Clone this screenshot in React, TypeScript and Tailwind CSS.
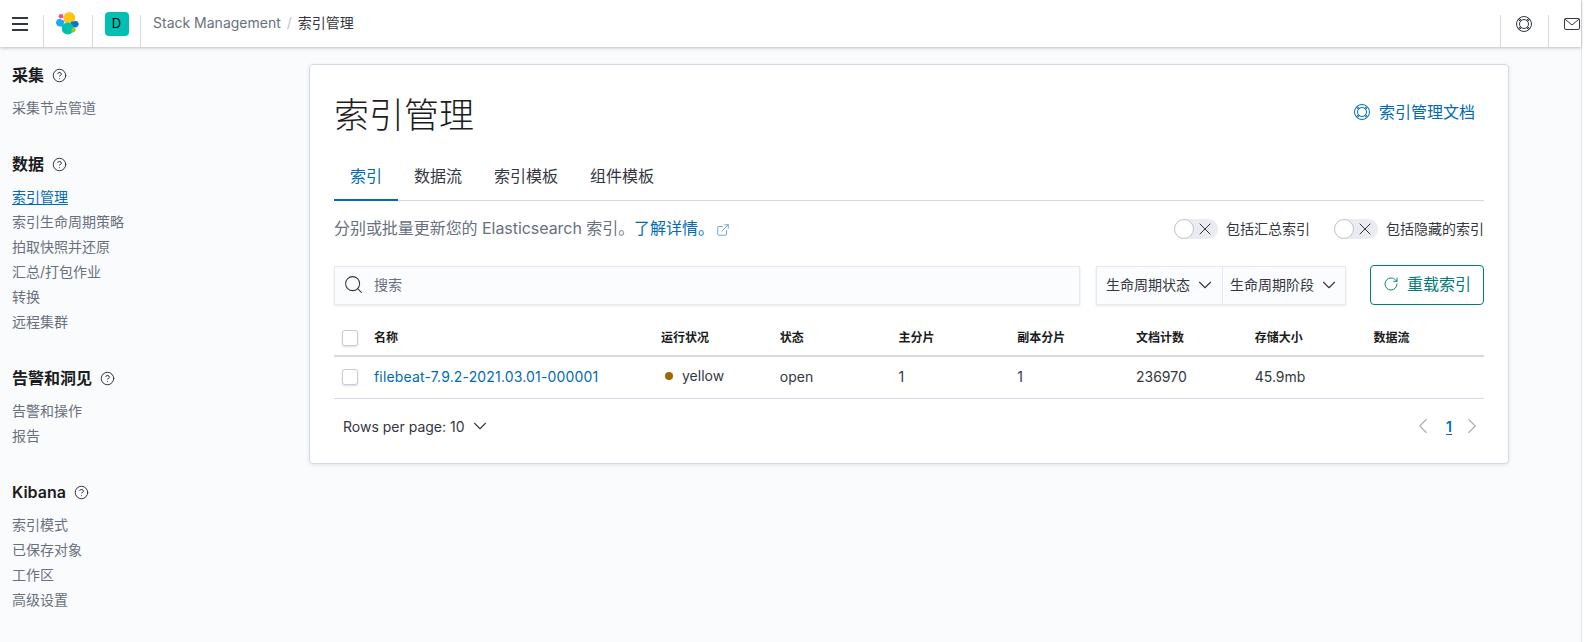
import React from "react";
import { X, ChevronDown, ChevronLeft, ChevronRight, Search, RotateCw, CircleHelp, ExternalLink } from "lucide-react";

const font = "font-['Inter','Noto_Sans_CJK_SC',sans-serif]";

function Logo() {
  return (
    <svg width="23" height="23" viewBox="0 0 23 23">
      <circle cx="13.300" cy="6" r="6" fill="#fec514" />
      <circle cx="5" cy="4.300" r="2.300" fill="#f04e98" />
      <path d="M0 10.500C0 8.300 2 6.500 4.200 7.100L8.300 8.800C8.200 10.500 7.600 12.500 6.800 14.300C6 14.800 5 14.800 4 14.600C1.700 14.300 0 12.700 0 10.500Z" fill="#1ba9f5" />
      <path d="M15 9.700L19.500 9C21.600 9 22.900 10.500 22.700 12.300C22.600 14.300 20.600 15.800 18.600 15.500L15.100 14.500C14.500 13 14.500 11.300 15 9.700Z" fill="#0077cc" />
      <circle cx="11.700" cy="16.500" r="6" fill="#00bfb3" />
      <path d="M15.500 16.200L17.800 15.700C19.300 15.700 20 17 19.500 18.400C18.900 20 17 21 15.200 20.400C15.700 19.100 15.800 17.500 15.500 16.200Z" fill="#93c90e" />
    </svg>
  );
}

function Buoy({ className = "" }: { className?: string }) {
  return (
    <svg width="16" height="16" viewBox="0 0 16 16" fill="none" stroke="currentColor" strokeWidth="1" className={className}>
      <circle cx="8" cy="8" r="7.500" />
      <circle cx="8" cy="8" r="4.500" />
      <path d="M2.700 2.700L4.800 4.800M13.300 2.700L11.200 4.800M2.700 13.300L4.800 11.200M13.300 13.300L11.200 11.200" strokeWidth="2.200" />
      <path d="M3.300 3.300L4.500 4.500M12.700 3.300L11.500 4.500M3.300 12.700L4.500 11.500M12.700 12.700L11.500 11.500" stroke="#fff" strokeWidth="0.700" />
    </svg>
  );
}

function Separator() {
  return <span className="absolute left-0 bottom-0 h-[32px] w-px bg-[#d3dae6]" />;
}

function Group({ title, items, className = "" }: { title: string; items: string[]; className?: string }) {
  return (
    <div className={className}>
      <div className="flex items-center h-[24px]">
        <span className="text-[16px] font-semibold text-[#1a1c21] leading-[24px]">{title}</span>
        <CircleHelp size={15} strokeWidth={1.6} className="ml-[8px] text-[#343741]" />
      </div>
      <ul className="mt-[8px]">
        {items.map((t) => (
          <li key={t} className={`h-[25px] text-[14px] leading-[25px] ${t === "索引管理" ? "text-[#006bb4]" : "text-[#69707d]"}`}>
            <span className={t === "索引管理" ? "underline underline-offset-2" : ""}>{t}</span>
          </li>
        ))}
      </ul>
    </div>
  );
}

const headers = ["运行状况", "状态", "主分片", "副本分片", "文档计数", "存储大小", "数据流"];

function Toggle({ label }: { label: string }) {
  return (
    <div className="flex items-center gap-[8px] mt-[1px]">
      <div className="w-[44px] h-[20px] rounded-full bg-[#e9ebf0] flex items-center">
        <div className="w-[20px] h-[20px] rounded-full bg-white border border-[#c2c3c9]" />
        <X size={20} strokeWidth={1.200} className="ml-[1px] text-[#343741]" />
      </div>
      <span className="text-[14px] leading-[20px] text-[#343741]">{label}</span>
    </div>
  );
}

function Checkbox() {
  return (
    <div className="w-[40px] shrink-0 pl-[8px]">
      <div className="w-[16px] h-[16px] bg-white border border-[#c9cdd8] rounded-[3px] shadow-[0_1px_2px_rgba(60,70,110,0.2)]" />
    </div>
  );
}

export default function App() {
  return (
    <div className={`${font} w-[1584px] h-[642px] bg-white overflow-hidden`}>
      <div className="w-[1582px] h-[642px] bg-[#fafbfd] border-r border-[#e4e5e9] flex flex-col">
        <header className="h-[47px] shrink-0 bg-white flex items-center shadow-[0_1px_3px_rgba(60,70,110,0.35)] relative z-10">
          <div className="w-[43px] h-full flex items-center pl-[8px]">
            <svg width="24" height="24" viewBox="0 0 24 24" stroke="#343741" strokeWidth="2">
              <path d="M4 6H20M4 12H20M4 18H20" />
            </svg>
          </div>
          <div className="relative w-[49px] h-full flex items-center justify-center">
            <Separator />
            <Logo />
          </div>
          <div className="relative w-[48px] h-full flex items-center justify-center">
            <Separator />
            <div className="w-[24px] h-[24px] ml-[1px] rounded-[4px] bg-[#00bfb3] flex items-center justify-center text-[13px] text-black">D</div>
          </div>
          <div className="relative h-full flex items-center pl-[13px] pb-[2px] text-[14px] leading-[20px]">
            <Separator />
            <span className="text-[#69707d]">Stack Management</span>
            <span className="text-[#c2c3c9] mx-[6px]">/</span>
            <span className="text-[#343741]">索引管理</span>
          </div>
          <div className="ml-auto flex h-full">
            <div className="relative w-[48px] flex items-center justify-center text-[#343741]">
              <Separator />
              <Buoy />
            </div>
            <div className="relative w-[33px] flex items-center pl-[16px]">
              <Separator />
              <svg width="16" height="12" viewBox="0 0 16 12" fill="none" stroke="#343741" className="shrink-0">
                <rect x="0.500" y="0.500" width="15" height="11" rx="1.500" />
                <path d="M0.800 1L8 7L15.200 1" />
              </svg>
            </div>
          </div>
        </header>
        <div className="flex flex-1 min-h-0">
          <aside className="w-[309px] shrink-0 pl-[12px] pt-[16px]">
            <Group title="采集" items={["采集节点管道"]} />
            <Group title="数据" items={["索引管理", "索引生命周期策略", "拍取快照并还原", "汇总/打包作业", "转换", "远程集群"]} className="mt-[32px]" />
            <Group title="告警和洞见" items={["告警和操作", "报告"]} className="mt-[32px]" />
            <Group title="Kibana" items={["索引模式", "已保存对象", "工作区", "高级设置"]} className="mt-[32px]" />
          </aside>
          <main className="pt-[17px]">
            <section className="w-[1200px] h-[400px] bg-white border border-[#d3dae6] rounded-[4px] shadow-[0_1px_4px_rgba(60,70,110,0.12)] px-[24px] pt-[26px]">
              <div className="flex items-start justify-between h-[48px]">
                <h1 className="text-[35px] leading-[48px] font-light text-[#1a1c21]">索引管理</h1>
                <div className="flex items-center gap-[9px] mt-[9px] pr-[9px] text-[#006bb4] text-[16px] leading-[24px]">
                  <Buoy />
                  <span>索引管理文档</span>
                </div>
              </div>
              <div className="flex mt-[16px] h-[46px] border-b border-[#d3dae6] text-[16px] leading-[42px] text-[#343741]">
                <div className="w-[64px] h-[46px] text-center text-[#006bb4] border-b-2 border-[#006bb4]">索引</div>
                <div className="w-[80px] text-center">数据流</div>
                <div className="w-[96px] text-center">索引模板</div>
                <div className="w-[96px] text-center">组件模板</div>
              </div>
              <div className="flex items-center mt-[15px] h-[24px]">
                <p className="text-[16px] leading-[24px] text-[#69707d] tracking-[-0.050px]">
                  分别或批量更新您的 Elasticsearch 索引。<span className="text-[#006bb4]">了解详情。</span>
                </p>
                <ExternalLink size={14} strokeWidth={1.500} className="ml-[2px] mt-[3px] text-[#5a9bd0]" />
                <div className="ml-auto flex gap-[24px]">
                  <Toggle label="包括汇总索引" />
                  <Toggle label="包括隐藏的索引" />
                </div>
              </div>
              <div className="flex mt-[25px] h-[40px]">
                <div className="w-[746px] h-[39px] mt-[1px] pb-[2px] bg-[#fbfcfd] border border-[#e6e9f0] shadow-[0_1px_2px_rgba(60,70,110,0.12)] flex items-center pl-[8px]">
                  <Search size={21} strokeWidth={1.150} className="text-[#343741]" />
                  <span className="ml-[10px] text-[14px] text-[#69707d]">搜索</span>
                </div>
                <div className="ml-[16px] w-[250px] h-[39px] mt-[1px] bg-[#fbfcfd] border border-[#e6e9f0] shadow-[0_1px_2px_rgba(60,70,110,0.12)] flex text-[14px] text-[#343741]">
                  <div className="w-[126px] flex items-center pl-[9px] pb-[2px] border-r border-[#e6e9f0]">生命周期状态<ChevronDown size={22} strokeWidth={1.200} className="ml-[4px]" /></div>
                  <div className="flex items-center pl-[7px] pb-[2px]">生命周期阶段<ChevronDown size={22} strokeWidth={1.200} className="ml-[4px]" /></div>
                </div>
                <div className="ml-[24px] w-[114px] h-[40px] pb-[2px] border border-[#017d73] rounded-[4px] flex items-center justify-center text-[#017d73] text-[16px]">
                  <RotateCw size={16} strokeWidth={1.400} className="mr-[8px]" />重载索引
                </div>
              </div>
              <div className="flex items-center h-[52px] pt-[16px] border-b-2 border-[#d5d9e6] text-[12px] font-semibold text-[#1a1c21]">
                <Checkbox />
                <div className="w-[287px] shrink-0">名称</div>
                {headers.map((t) => <div key={t} className="w-[118.750px] shrink-0 whitespace-nowrap">{t}</div>)}
              </div>
              <div className="flex items-center h-[42px] pb-[2px] border-b border-[#d5d9e6] text-[14px] text-[#343741]">
                <Checkbox />
                <div className="w-[287px] shrink-0 text-[#006bb4] tracking-[0.160px]">filebeat-7.9.2-2021.03.01-000001</div>
                <div className="w-[118.750px] flex items-center -translate-y-[1px]"><span className="w-[8px] h-[8px] ml-[4px] rounded-full bg-[#9b6900]" /><span className="ml-[9px]">yellow</span></div>
                <div className="w-[118.750px]">open</div>
                <div className="w-[118.750px]">1</div>
                <div className="w-[118.750px]">1</div>
                <div className="w-[118.750px]">236970</div>
                <div className="w-[118.750px]">45.9mb</div>
              </div>
              <div className="flex items-center h-[56px] pb-[2px] text-[14px] text-[#343741] pl-[9px]">
                <span>Rows per page: 10</span>
                <ChevronDown size={22} strokeWidth={1.200} className="ml-[4px]" />
                <div className="ml-auto flex items-center -mr-[1px]">
                  <ChevronLeft size={26} strokeWidth={1} className="text-[#a9adb5]" />
                  <span className="ml-[10px] mr-[7px] text-[#006bb4] font-semibold underline underline-offset-2">1</span>
                  <ChevronRight size={26} strokeWidth={1} className="text-[#a9adb5]" />
                </div>
              </div>
            </section>
          </main>
        </div>
      </div>
    </div>
  );
}
